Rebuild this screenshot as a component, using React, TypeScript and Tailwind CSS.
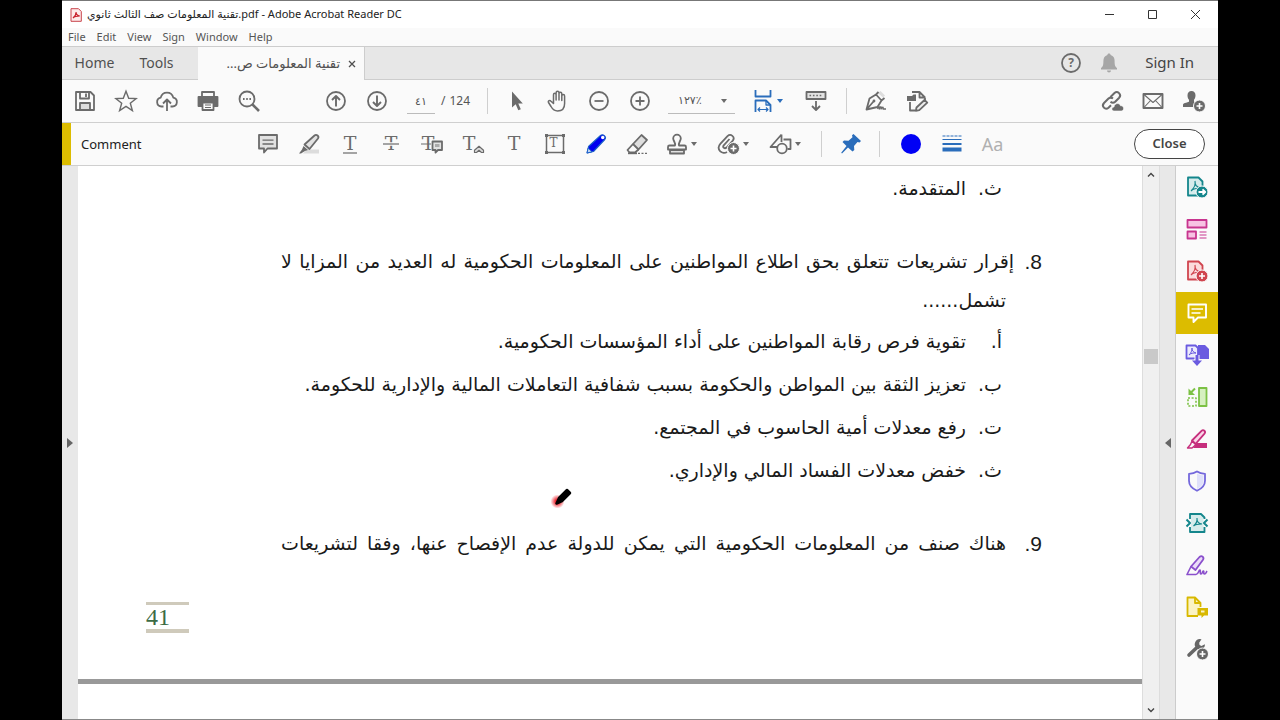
import React, { useState } from 'react';
import clsx from 'clsx';

type IconProps = { children: React.ReactNode; className?: string };

const Icon = ({ children, className = 'text-[#6b6b6b]' }: IconProps) => (
  <svg
    viewBox="0 0 24 24"
    className={clsx('h-6 w-6 shrink-0', className)}
    fill="none"
    stroke="currentColor"
    strokeWidth="1.8"
    strokeLinejoin="round"
    aria-hidden="true"
  >
    {children}
  </svg>
);

const Caret = ({ className = 'text-[#6b6b6b]' }: { className?: string }) => (
  <svg viewBox="0 0 6 4" className={clsx('h-1 w-1.5 shrink-0', className)} aria-hidden="true">
    <path d="M0 0h6L3 4z" fill="currentColor" />
  </svg>
);

const PlusBadge = ({ cx, cy }: { cx: number; cy: number }) => (
  <g>
    <circle cx={cx} cy={cy} r="6" fill="currentColor" stroke="#fafafa" strokeWidth="1" />
    <path d={`M${cx - 3} ${cy}h6M${cx} ${cy - 3}v6`} stroke="#fff" strokeWidth="1.6" />
  </g>
);

const Letter = ({ x, y, size, children }: { x: number; y: number; size: number; children: string }) => (
  <text
    x={x}
    y={y}
    fontSize={size}
    fill="currentColor"
    stroke="none"
    textAnchor="middle"
    fontFamily="'DejaVu Serif', serif"
  >
    {children}
  </text>
);

// Acrobat swirl used on the PDF document icons
const swirl = 'M10 6c1 3.500-1 7-4 10M10 6c-.5 3.500 1 6 6 7M6 16c2-2 5-3 10-3';

const fileTools = [
  {
    label: 'Save',
    icon: (
      <Icon>
        <path d="M3 3h14.5L21 6.500V21H3z" />
        <path d="M7 3v6.500h9V3M13 4.500v3.500" />
        <path d="M7 14h10v7H7z" fill="#ddd" />
      </Icon>
    ),
  },
  {
    label: 'Star',
    icon: (
      <Icon>
        <path d="M12 2.200l2.700 7.100 7.500.300-5.900 4.700 2.100 7.300L12 17.400l-6.400 4.200 2.100-7.300-5.900-4.700 7.500-.300z" strokeWidth="1.400" strokeLinejoin="miter" />
      </Icon>
    ),
  },
  {
    label: 'Upload',
    icon: (
      <Icon>
        <path d="M8.500 17.500H6.500a4.500 4.500 0 0 1-.8-8.900 6.500 6.500 0 0 1 12.600 0 4.500 4.500 0 0 1-.8 8.900h-2" />
        <path d="M12 22V11M8 14.500l4-4 4 4" />
      </Icon>
    ),
  },
  {
    label: 'Print',
    icon: (
      <Icon>
        <path d="M6 8V3h12v5" />
        <path d="M2.500 8h19v9h-19z" fill="currentColor" />
        <path d="M6.500 13.500h11V21h-11z" fill="#fafafa" />
        <path d="M9 16h6M9 18.500h6" strokeWidth="1.100" />
      </Icon>
    ),
  },
  {
    label: 'Search',
    icon: (
      <Icon>
        <circle cx="10" cy="10" r="7.500" />
        <path d="M15.500 15.500l6.500 6.500" strokeWidth="2.600" />
        <path d="M6 10h1.600M9.200 10h1.600M12.400 10H14" />
      </Icon>
    ),
  },
];

const pageTools = [
  {
    label: 'Previous page',
    icon: (
      <Icon>
        <circle cx="12" cy="12" r="9" />
        <path d="M12 17.500V7M8 11l4-4 4 4" strokeWidth="1.900" />
      </Icon>
    ),
  },
  {
    label: 'Next page',
    icon: (
      <Icon>
        <circle cx="12" cy="12" r="9" />
        <path d="M12 6.500V17M8 13l4 4 4-4" strokeWidth="1.900" />
      </Icon>
    ),
  },
];

const viewTools = [
  {
    label: 'Select',
    icon: (
      <Icon>
        <path d="M7 2.500v16l3.700-3.200 2.600 6 2.500-1.100-2.500-5.700h4.500z" fill="currentColor" stroke="none" />
      </Icon>
    ),
  },
  {
    label: 'Hand',
    icon: (
      <Icon>
        <path
          d="M7.500 14.500V5.800c0-2 2.600-2 2.600 0V11 4c0-2.200 2.900-2.200 2.900 0v7-6.200c0-2 2.800-2 2.800 0V11.500 7c0-2 2.800-1.900 2.800 0v7.500c0 5-2.600 7.500-7 7.500-3.600 0-5.200-2-6.600-4.500l-2.500-4c-.9-1.700 1.300-2.600 2.500-1.300z"
          strokeWidth="1.500"
        />
      </Icon>
    ),
  },
  {
    label: 'Zoom out',
    icon: (
      <Icon>
        <circle cx="12" cy="12" r="9" />
        <path d="M7.500 12h9" />
      </Icon>
    ),
  },
  {
    label: 'Zoom in',
    icon: (
      <Icon>
        <circle cx="12" cy="12" r="9" />
        <path d="M7.500 12h9M12 7.500v9" />
      </Icon>
    ),
  },
];

const commentTools = [
  {
    label: 'Sticky note',
    icon: (
      <Icon>
        <path d="M3 3h18v13.500h-9.500L8 20.500v-4H3z" fill="#e2e2e2" />
        <path d="M6.500 8.200h11M6.500 12h11" strokeWidth="1.300" />
      </Icon>
    ),
  },
  {
    label: 'Highlight',
    icon: (
      <Icon>
        <path d="M10 17.500h12v4H6z" fill="#dcdcdc" stroke="none" />
        <path d="M7.500 12.500l10-9c2-1.700 5 .8 3.500 3l-8.500 10.500z" fill="#e2e2e2" />
        <path d="M6.500 14l4.500 4-3 1-4 2.500H2l3-4z" fill="currentColor" stroke="none" />
      </Icon>
    ),
  },
  {
    label: 'Underline',
    icon: (
      <Icon>
        <Letter x={12} y={18} size={19}>T</Letter>
        <path d="M5 21h14" strokeWidth="1.200" />
      </Icon>
    ),
  },
  {
    label: 'Strikethrough',
    icon: (
      <Icon>
        <Letter x={12} y={18} size={19}>T</Letter>
        <path d="M4 12h16" stroke="#fafafa" strokeWidth="3.500" />
        <path d="M4 12h16" strokeWidth="1.200" />
      </Icon>
    ),
  },
  {
    label: 'Replace text',
    icon: (
      <Icon>
        <Letter x={8} y={18} size={19}>T</Letter>
        <path d="M1 12h10" strokeWidth="1" />
        <path d="M12.500 9.500h9.500v8.500h-4L15.500 20.500V18h-3z" fill="#e2e2e2" />
        <path d="M15 12h4.500v3H15z" fill="#aaa" stroke="none" />
      </Icon>
    ),
  },
  {
    label: 'Insert text',
    icon: (
      <Icon>
        <Letter x={8} y={18} size={19}>T</Letter>
        <path d="M13.500 20.500v-2.200l4.500-4 4.500 4v2.200h-2L18 18.300l-2.500 2.200z" fill="#ddd" strokeWidth="1.200" />
      </Icon>
    ),
  },
  {
    label: 'Add text',
    icon: (
      <Icon>
        <Letter x={12} y={18} size={19}>T</Letter>
      </Icon>
    ),
  },
  {
    label: 'Text box',
    icon: (
      <Icon>
        <path d="M3.500 3.500h17v17h-17z" strokeWidth="1.500" />
        <path d="M2 2h3v3H2zM19 2h3v3h-3zM2 19h3v3H2zM19 19h3v3h-3z" fill="currentColor" stroke="none" />
        <Letter x={10.5} y={15} size={12}>T</Letter>
      </Icon>
    ),
  },
  {
    label: 'Pencil',
    icon: (
      <Icon className="text-[#1a5fc8]">
        <path d="M3 21l1.500-6.500L16.500 3.500c2.500-2.200 6.500 1.500 4.300 4L9.500 19.500z" fill="#0000f0" strokeWidth="1.100" />
        <path d="M3 21l1.200-5 3.800 3.800z" fill="#c4d8f5" strokeWidth="1" />
        <circle cx="18.700" cy="5.500" r="1.700" fill="#fff" stroke="none" />
      </Icon>
    ),
  },
  {
    label: 'Eraser',
    icon: (
      <Icon>
        <path d="M8 12l8.500-9 5.500 5-8.500 9.500z" fill="#dedede" />
        <path d="M8 12l-5.500 6 2 2.500h5.500l3.500-3" />
        <path d="M3 21.300h9" />
        <path d="M13 21.300h9" strokeWidth="1.300" strokeDasharray="2 1.500" />
      </Icon>
    ),
  },
];

const menuTools = [
  {
    label: 'Stamp',
    icon: (
      <Icon>
        <path d="M10 13.500c1-2.500-1.800-4.500-1.800-7a3.800 3.800 0 0 1 7.600 0c0 2.500-2.800 4.500-1.800 7h5.500c1 0 1.500.6 1.500 1.500v2.500H3V15c0-.9.500-1.500 1.500-1.500z" />
        <path d="M5 18h14v3.500H5z" fill="#e2e2e2" />
      </Icon>
    ),
  },
  {
    label: 'Attach',
    icon: (
      <Icon>
        <path d="M10 20c-2 1.300-5 1-6.700-.6-2.300-2.300-1.800-5.500.2-7.800l7-7.500c3.200-3 8 .8 5.300 4.500L9.500 15.500c-1.800 1.800-4.300-.2-2.800-2.200L12.500 7" />
        <PlusBadge cx={16.5} cy={16.5} />
      </Icon>
    ),
  },
  {
    label: 'Drawing tools',
    icon: (
      <Icon>
        <path d="M12.500 2.500L1.500 15h7M12.500 2.500V10M14.500 7.500h7V17h-3" />
        <circle cx="13" cy="16.500" r="4.800" />
      </Icon>
    ),
  },
];

const accountTools = [
  {
    label: 'Share link',
    icon: (
      <Icon>
        <path d="M10.500 8l4-4c3-2.800 7.500 1.500 4.700 4.700l-4 4c-1.500 1.400-3.200 1.300-4.700 0M13 9.500c-1.500-1.200-3-1.200-4.500 0L4 14c-3 3.200 1.200 7.500 4.500 4.700l2.500-2.500" strokeWidth="2" />
        <path d="M14 22c-2.800 0-2.800-3.800 0-4 .3-4 5.500-4.700 6.500-1.200 3.500-.5 4.300 4.800.8 5.200z" fill="currentColor" stroke="#fafafa" strokeWidth=".6" />
      </Icon>
    ),
  },
  {
    label: 'Email',
    icon: (
      <Icon>
        <path d="M2.500 5h19v14h-19z" strokeWidth="1.900" />
        <path d="M3 5.500l9 8 9-8M3 18.500l6.500-7M21 18.500l-6.500-7" strokeWidth="1.100" />
      </Icon>
    ),
  },
  {
    label: 'Add people',
    icon: (
      <Icon>
        <path d="M9.500 2c2.500 0 4 1.700 4 4.200 0 2-.7 3.500-1.500 4.500v2l3 1.300v4H1v-2c0-2.200 3.500-2.300 6-3.300v-2c-.9-1-1.500-2.500-1.500-4.500 0-2.500 1.500-4.200 4-4.200z" fill="currentColor" stroke="none" />
        <PlusBadge cx={17.5} cy={17} />
      </Icon>
    ),
  },
];

const sideTools = [
  {
    label: 'Export PDF',
    icon: (
      <Icon className="text-[#14868c]">
        <path d="M3 2.500h10.500l4 4V20.500H3z" fill="#d6ecec" />
        <path d={swirl} strokeWidth="1.100" />
        <circle cx="17" cy="17" r="6" fill="currentColor" stroke="#fafafa" strokeWidth="1" />
        <path d="M13.500 17h6M17.500 14.300l2.700 2.700-2.700 2.700" stroke="#fff" />
      </Icon>
    ),
  },
  {
    label: 'Edit PDF',
    icon: (
      <Icon className="text-[#c8358f]">
        <path d="M2.500 3h19v7.500h-19zM2.500 14.500H11V21.500H2.500z" fill="#f7c3e3" />
        <path d="M14.500 15h7M14.500 18h7M14.500 21h7" strokeWidth="1.100" />
      </Icon>
    ),
  },
  {
    label: 'Create PDF',
    icon: (
      <Icon className="text-[#d0454f]">
        <path d="M3 2.500h10.500l4 4V20.500H3z" fill="#fbdcdc" />
        <path d={swirl} strokeWidth="1.100" />
        <PlusBadge cx={17} cy={17} />
      </Icon>
    ),
  },
  {
    label: 'Comment',
    active: true,
    icon: (
      <Icon className="text-white">
        <path d="M3.500 3.500h17.500v13h-8L8.500 21v-4.500h-5z" strokeWidth="1.900" />
        <path d="M6.500 8h11.500M6.500 12h9" strokeWidth="1.600" />
      </Icon>
    ),
  },
  {
    label: 'Combine files',
    icon: (
      <Icon className="text-[#6a5be0]">
        <path d="M13 2h7l4 4v10H13z" fill="currentColor" stroke="none" />
        <path d="M1.500 2.500h9l2.500 2.500V15.500H1.500z" fill="#ecebfc" />
        <path d="M7 5c0 3-1 5-3 7M7 5c0 3 1 4 4 5M4 12c2-2 4-2 7-2" strokeWidth="1" />
        <path d="M12 12v9M8 17.500l4 4.500 4-4.500" stroke="#fafafa" strokeWidth="5" />
        <path d="M12 12v8" strokeWidth="3" />
        <path d="M7 17.500h10L12 23z" fill="currentColor" stroke="none" />
      </Icon>
    ),
  },
  {
    label: 'Organize pages',
    icon: (
      <Icon className="text-[#7cc144]">
        <path d="M14 3h7.500v18H14z" fill="#d6f0c0" />
        <path d="M3 13h8v8H3z" strokeDasharray="2 1.600" strokeWidth="1.600" />
        <path d="M10 3.500L5 8.500" strokeWidth="2" />
        <path d="M3.500 3.500V10H10z" fill="currentColor" stroke="none" />
      </Icon>
    ),
  },
  {
    label: 'Redact',
    icon: (
      <Icon className="text-[#c62f7d]">
        <path d="M12 16h10v5H8z" fill="currentColor" stroke="none" />
        <path d="M7 13.500l9.500-9.700c2-1.800 4.700.7 3 2.800l-9 10.400z" fill="#fad5e8" />
        <path d="M7 14l-1.500 3.500L2.500 21H7l4-3.500z" strokeWidth="1.400" />
      </Icon>
    ),
  },
  {
    label: 'Protect',
    icon: (
      <Icon className="text-[#7468dc]">
        <path d="M12 2.500c2.500 1.800 5 2.300 8 2.300v7c0 5-3.500 8-8 10-4.500-2-8-5-8-10v-7c3 0 5.500-.5 8-2.300z" />
        <path d="M12 4.500v15.500c4-2 6.500-4.500 6.500-8.500V6.300c-2.500-.1-4.500-.7-6.500-1.800z" fill="#dfe0fa" stroke="none" />
      </Icon>
    ),
  },
  {
    label: 'Compress PDF',
    icon: (
      <Icon className="text-[#14868c]">
        <path d="M5 8V3h11l3.500 3.500V8M5 16v5h14.500v-5" fill="#d6ecec" />
        <path d="M6 8h12.500v8H6z" fill="#d6ecec" stroke="none" />
        <path d="M12 7c.5 3-.5 5.500-3.500 8M12 8c0 3 1.500 4.500 5 5M8.500 15c2.500-2 5-2 8-2" strokeWidth="1.200" />
        <path d="M1.500 8.500L5 12l-3.500 3.500M22.500 8.500L19 12l3.500 3.500" strokeWidth="2" />
      </Icon>
    ),
  },
  {
    label: 'Fill & Sign',
    icon: (
      <Icon className="text-[#8a4fcc]">
        <path d="M6 13.500L14.500 4c2.300-2 5 .3 3.500 2.800L10.500 17z" fill="#eadcf8" />
        <path d="M6 13.500L2 21.500h9c2.500 0 3-5 4-4.500s-.5 4 1 4 1.500-3.500 2.500-3-.5 3 1 3 1.500-1.500 2.500-3" strokeWidth="1.600" />
      </Icon>
    ),
  },
  {
    label: 'Send for comments',
    icon: (
      <Icon className="text-[#d8b800]">
        <path d="M13 21H2.500V2.500H10l5.500 5.500v4" fill="#fbf3c4" />
        <path d="M10 2.500V8h5.500" />
        <path d="M12.500 13H23v7.500h-4L16.500 23v-2.500h-4z" fill="currentColor" stroke="none" />
        <path d="M16 15.500h3.500v2H16z" fill="#fbf3c4" stroke="none" />
      </Icon>
    ),
  },
  {
    label: 'More tools',
    icon: (
      <Icon className="text-[#666]">
        <path d="M4 18l9-8.500" strokeWidth="3.600" strokeLinecap="round" />
        <path d="M16.500 2.200a5.200 5.200 0 1 0 2.500 8.300c.8-1 1-2 .8-3.200L16.500 9l-2-1-.3-2.300z" fill="currentColor" stroke="none" />
        <PlusBadge cx={17.5} cy={17} />
      </Icon>
    ),
  },
];

const options = {
  a: { mark: 'أ.', text: 'تقوية فرص رقابة المواطنين على أداء المؤسسات الحكومية.' },
  b: { mark: 'ب.', text: 'تعزيز الثقة بين المواطن والحكومة بسبب شفافية التعاملات المالية والإدارية للحكومة.' },
  c: { mark: 'ت.', text: 'رفع معدلات أمية الحاسوب في المجتمع.' },
  d: { mark: 'ث.', text: 'خفض معدلات الفساد المالي والإداري.' },
};

const ToolButton = ({ label, children }: { label: string; children: React.ReactNode }) => (
  <button type="button" aria-label={label} className="flex h-10 w-[41px] shrink-0 items-center justify-center">
    {children}
  </button>
);

const Divider = () => <div className="h-[26px] w-px shrink-0 bg-[#cfcfcf]" />;

const TitleBar = () => (
  <header className="flex h-7 items-center border-t border-[#777] bg-white pl-2">
    <svg viewBox="0 0 12 14" className="h-3.5 w-3" fill="none" aria-hidden="true">
      <path d="M1 .7h7.500L11.300 3.500v9.800H1z" fill="#fdeaea" stroke="#c8444c" />
      <path d="M6 4c.3 2-.7 4-3 6M6 4c0 2 1 3.500 3.800 4M3 10c1.500-1.600 3.500-2 6.800-2" stroke="#c8202c" strokeWidth="1.200" />
    </svg>
    <h1 className="ml-[5px] flex-1 whitespace-nowrap text-[11px] text-[#222]">
      تقنية المعلومات صف الثالث ثانوي.pdf - Adobe Acrobat Reader DC
    </h1>
    <div className="flex pr-px text-[#333]">
      {[
        { label: 'Minimize', d: 'M1 5.500h9' },
        { label: 'Maximize', d: 'M1.500 1.500h8v8h-8z' },
        { label: 'Close window', d: 'M1 1l9 9M10 1l-9 9' },
      ].map((control) => (
        <button key={control.label} type="button" aria-label={control.label} className="flex h-6 w-[43px] items-center justify-center">
          <svg viewBox="0 0 11 11" className="h-[11px] w-[11px]" fill="none" stroke="currentColor">
            <path d={control.d} />
          </svg>
        </button>
      ))}
    </div>
  </header>
);

const TabBar = () => (
  <div className="flex h-[34px] items-stretch border-y border-[#cdcdcd] bg-[#e7e7e7] text-sm text-[#505050]">
    <button type="button" className="w-[65px]">Home</button>
    <button type="button" className="w-[71px] pr-3">Tools</button>
    <div className="-mb-px flex w-[167px] items-center justify-end gap-2 border-r border-[#cdcdcd] bg-[#fafafa] pr-2">
      <span dir="rtl" className="whitespace-nowrap text-[13px]">تقنية المعلومات ص...</span>
      <button type="button" aria-label="Close tab" className="flex h-4 w-2 items-center justify-center">
        <svg viewBox="0 0 8 8" className="h-2 w-2" fill="none" stroke="currentColor" strokeWidth="1.300">
          <path d="M1 1l6 6M7 1L1 7" />
        </svg>
      </button>
    </div>
    <div className="ml-auto flex items-center pr-6">
      <button type="button" aria-label="Help">
        <Icon>
          <circle cx="12" cy="12" r="9" />
          <text x="12" y="16" textAnchor="middle" fontSize="12" fontWeight="700" fill="currentColor" stroke="none">?</text>
        </Icon>
      </button>
      <button type="button" aria-label="Notifications" className="ml-[14px]">
        <Icon className="text-[#a6a6a6]">
          <path d="M12 2.500c1 0 1.500.5 1.600 1.500 3 .8 4 3.200 4 6 0 4 .4 5.500 2.400 7V18.500H4V17c2-1.500 2.400-3 2.400-7 0-2.800 1-5.200 4-6 .1-1 .6-1.500 1.600-1.500zM10 19.500h4c0 2.500-4 2.500-4 0z" fill="currentColor" stroke="none" />
        </Icon>
      </button>
      <button type="button" className="ml-6 whitespace-nowrap text-[15px] text-[#444]">Sign In</button>
    </div>
  </div>
);

const Toolbar = () => {
  const [page, setPage] = useState('٤١');

  return (
    <div className="flex h-[43px] items-center border-b border-[#cfcfcf] bg-[#fafafa] pl-0.5 pr-1">
      {fileTools.map((tool) => (
        <ToolButton key={tool.label} label={tool.label}>{tool.icon}</ToolButton>
      ))}
      <div className="ml-[46px] flex">
        {pageTools.map((tool) => (
          <ToolButton key={tool.label} label={tool.label}>{tool.icon}</ToolButton>
        ))}
      </div>
      <div className="ml-2.5 flex items-center text-xs text-[#555]">
        <input
          aria-label="Page number"
          value={page}
          onChange={(e) => setPage(e.target.value)}
          className="h-[25px] w-7 border-b border-[#bbb] bg-transparent text-center text-[11px] outline-none"
        />
        <span className="flex w-[52px] gap-1 pl-1.5"><span>/</span><span>124</span></span>
      </div>
      <Divider />
      <div className="ml-2 flex">
        {viewTools.map((tool) => (
          <ToolButton key={tool.label} label={tool.label}>{tool.icon}</ToolButton>
        ))}
      </div>
      <div className="ml-2 grid w-[67px] shrink-0 items-center border-b border-[#bbb] text-[#555]">
        <select aria-label="Zoom level" className="col-start-1 row-start-1 h-6 appearance-none bg-transparent pl-2.5 text-[11px] outline-none">
          <option>١٢٧٪</option>
        </select>
        <Caret className="pointer-events-none col-start-1 row-start-1 mr-2 justify-self-end text-[#6b6b6b]" />
      </div>
      <button type="button" aria-label="Fit width" className="ml-4 flex h-10 items-center gap-0.5">
        <Icon className="text-[#2a6dbb]">
          <path d="M4.500 1v6.500h15V1M4.500 23V11.500h10.500l4.500 4.500v7" />
          <path d="M15 11.500V16h4.500" strokeWidth="1.300" />
          <path d="M7 20.500h10M9 18.500l-2 2 2 2M15 18.500l2 2-2 2" strokeWidth="1.200" />
        </Icon>
        <Caret className="text-[#2a6dbb]" />
      </button>
      <div className="ml-3 mr-2.5">
        <ToolButton label="Page display">
          <Icon>
            <path d="M2.500 3h19v7h-19z" fill="#e2e2e2" />
            <path d="M5.500 6.500h13" strokeWidth="1.600" strokeDasharray="1.600 1.800" />
            <path d="M12 12v8.500M8 17l4 4 4-4" />
          </Icon>
        </ToolButton>
      </div>
      <Divider />
      <div className="ml-2 flex">
        <ToolButton label="Sign">
          <Icon>
            <path d="M16.500 2l4.500 4.500-2 2L14 4z" fill="#ddd" stroke="none" />
            <path d="M2.500 20.500l3-11 6.500-4 5.500 6-4 6.500zM2.500 20.500l7-8M12 5.500L14.500 3M17.500 11.500l3-2.500" />
            <circle cx="10" cy="12" r="1.400" fill="currentColor" stroke="none" />
            <path d="M13.500 20c1.500-3 2-3 1.800 0 1.500-3 2-3 1.800 0 1.500-2.500 2.500-2.500 1.900 0h3" strokeWidth="1.300" />
          </Icon>
        </ToolButton>
        <ToolButton label="Edit document">
          <Icon>
            <path d="M7 3h7.500l5.500 5.500M14.500 3v5.500H20M5 13v8.500h5M20 8.500V11" />
            <path d="M2 7h5l1.500-1.500H11V12H2z" fill="currentColor" stroke="none" />
            <path d="M11.500 18.500l8-7.500 2.800 2.700-8 7.500-3.500.6z" fill="#eee" />
          </Icon>
        </ToolButton>
      </div>
      <div className="ml-auto flex">
        {accountTools.map((tool) => (
          <ToolButton key={tool.label} label={tool.label}>{tool.icon}</ToolButton>
        ))}
      </div>
    </div>
  );
};

const CommentBar = () => (
  <div className="flex h-[43px] items-center border-b border-[#cfcfcf] bg-[#fafafa] pr-[13px]">
    <div className="w-[9px] self-stretch bg-[#dcbc00]" />
    <h2 className="w-[176px] pl-2.5 pt-0.5 text-[13px] text-[#222]">Comment</h2>
    {commentTools.map((tool) => (
      <ToolButton key={tool.label} label={tool.label}>{tool.icon}</ToolButton>
    ))}
    <div className="ml-2 flex gap-5">
      {menuTools.map((tool) => (
        <button key={tool.label} type="button" aria-label={tool.label} className="flex h-10 w-8 items-center gap-0.5">
          {tool.icon}
          <Caret />
        </button>
      ))}
    </div>
    <div className="ml-5 flex items-center gap-2">
      <Divider />
      <ToolButton label="Keep tool selected">
        <Icon className="text-[#2a6dbb]">
          <path d="M14.500 2l7.500 7-1.500 1.500-2-.5-3.500 4 .3 4-1.800 1.500L9 15.500 3 21.500l-.8-.8L7.500 14 3.500 10 5 8.500l4.500.3 4-3.500-.5-2z" fill="currentColor" stroke="none" />
        </Icon>
      </ToolButton>
      <Divider />
      <div className="ml-0.5 flex">
        <ToolButton label="Colour">
          <span className="h-5 w-5 rounded-full bg-[#0000f5]" />
        </ToolButton>
        <ToolButton label="Line thickness">
          <Icon className="text-[#2a6dbb]">
            <path d="M2.500 4h19" strokeWidth="1" strokeDasharray="3 1" />
            <path d="M2.500 7.500h19" strokeWidth="1" />
            <path d="M2.500 12h19" strokeWidth="2" />
            <path d="M2.500 17.500h19" strokeWidth="4" />
          </Icon>
        </ToolButton>
        <ToolButton label="Text properties">
          <span className="text-lg text-[#b0b0b0]">Aa</span>
        </ToolButton>
      </div>
    </div>
    <button type="button" className="ml-auto h-[30px] w-[71px] rounded-full border border-[#444] bg-white text-[13px] font-semibold text-[#444]">
      Close
    </button>
  </div>
);

const Option = ({ mark, text }: { mark: string; text: string }) => (
  <p className="flex h-[43px] items-center whitespace-nowrap pr-10">
    <span className="w-9 shrink-0">{mark}</span>
    {text}
  </p>
);

const QuestionNumber = ({ children, className }: { children: string; className: string }) => (
  <span className={clsx('shrink-0 font-["Liberation_Sans",sans-serif] text-[21px]', className)}>{children}</span>
);

const Document = () => (
  <main className="relative flex flex-1 flex-col bg-white font-['DejaVu_Sans',sans-serif] text-[19px] text-[#1a1a1a]">
    <section dir="rtl" className="pl-[203px] pr-[100px] pt-px">
      <Option {...options.d} text="المتقدمة." />
      <div className="mt-8 flex h-[39px] items-center whitespace-nowrap">
        <QuestionNumber className="w-7">8.</QuestionNumber>
        <p className="flex-1 [text-align-last:justify]">
          إقرار تشريعات تتعلق بحق اطلاع المواطنين على المعلومات الحكومية له العديد من المزايا لا
        </p>
      </div>
      <p className="flex h-[39px] items-center pr-9">تشمل......</p>
      <Option {...options.a} />
      <Option {...options.b} />
      <Option {...options.c} />
      <Option {...options.d} />
      <div className="mt-8 flex h-[39px] items-center whitespace-nowrap">
        <QuestionNumber className="w-9">9.</QuestionNumber>
        <p className="flex-1 [text-align-last:justify]">
          هناك صنف من المعلومات الحكومية التي يمكن للدولة عدم الإفصاح عنها، وفقا لتشريعات
        </p>
      </div>
    </section>
    <div className="ml-[68px] mt-[39px] h-[31px] w-[43px] border-b-4 border-t-3 border-[#cfcabb] font-['Liberation_Serif',serif] text-2xl leading-6 text-[#3c6b45]">
      41
    </div>
    <div className="mt-[46px] h-[5px] bg-[#999]" />
    {/* highlighter cursor over the page */}
    <svg viewBox="0 0 24 24" className="absolute left-[472px] top-[320px] h-6 w-6" aria-hidden="true">
      <defs>
        <radialGradient id="ink">
          <stop offset="0.300" stopColor="#ef2b35" />
          <stop offset="1" stopColor="#ef2b35" stopOpacity="0" />
        </radialGradient>
      </defs>
      <circle cx="7.500" cy="15.500" r="7" fill="url(#ink)" />
      <path d="M6.500 17.500l2.500-5.500 8-8 3 3-8 8z" fill="#000" stroke="#000" strokeWidth="2.500" strokeLinejoin="round" />
    </svg>
  </main>
);

const ScrollBar = () => (
  <div className="flex w-[18px] flex-col items-center border-x border-[#ddd] bg-[#f0f0f0] text-[#444]">
    <button type="button" aria-label="Scroll up" className="flex h-[17px] w-4 items-center justify-center">
      <svg viewBox="0 0 8 5" className="h-[5px] w-2" fill="none" stroke="currentColor" strokeWidth="1.400"><path d="M1 4.500l3-3 3 3" /></svg>
    </button>
    <div className="flex-[33]" />
    <div className="h-[15px] w-3.5 bg-[#c9c9c9]" />
    <div className="flex-[67]" />
    <button type="button" aria-label="Scroll down" className="flex h-[17px] w-4 items-center justify-center">
      <svg viewBox="0 0 8 5" className="h-[5px] w-2" fill="none" stroke="currentColor" strokeWidth="1.400"><path d="M1 .5l3 3 3-3" /></svg>
    </button>
  </div>
);

const App = () => {
  return (
    <div className="flex min-h-screen flex-col bg-black px-[62px] font-['Noto_Sans','DejaVu_Sans',sans-serif]">
      <div className="flex flex-1 flex-col border-b border-[#888]">
        <TitleBar />
        <nav className="flex h-[18px] items-center gap-[11px] bg-[#fafafa] pl-1.5 text-[11px] text-[#555]">
          {['File', 'Edit', 'View', 'Sign', 'Window', 'Help'].map((item) => (
            <button key={item} type="button">{item}</button>
          ))}
        </nav>
        <TabBar />
        <Toolbar />
        <CommentBar />
        <div className="flex flex-1">
          <button type="button" aria-label="Show navigation pane" className="flex w-4 items-center justify-center bg-[#e8e8e8]">
            <svg viewBox="0 0 6 10" className="h-2.5 w-1.5 text-[#666]" aria-hidden="true"><path d="M0 0v10l6-5z" fill="currentColor" /></svg>
          </button>
          <Document />
          <ScrollBar />
          <button type="button" aria-label="Hide tools pane" className="flex w-4 items-center justify-center border-r border-[#ccc] bg-[#e8e8e8]">
            <svg viewBox="0 0 6 10" className="h-2.5 w-1.5 text-[#666]" aria-hidden="true"><path d="M6 0v10L0 5z" fill="currentColor" /></svg>
          </button>
          <aside className="w-[42px] bg-[#fafafa]">
            {sideTools.map((tool) => (
              <button
                key={tool.label}
                type="button"
                aria-label={tool.label}
                className={clsx('flex h-[42px] w-full items-center justify-center', tool.active && 'bg-[#dcbc00]')}
              >
                {tool.icon}
              </button>
            ))}
          </aside>
        </div>
      </div>
    </div>
  );
};

export default App;
